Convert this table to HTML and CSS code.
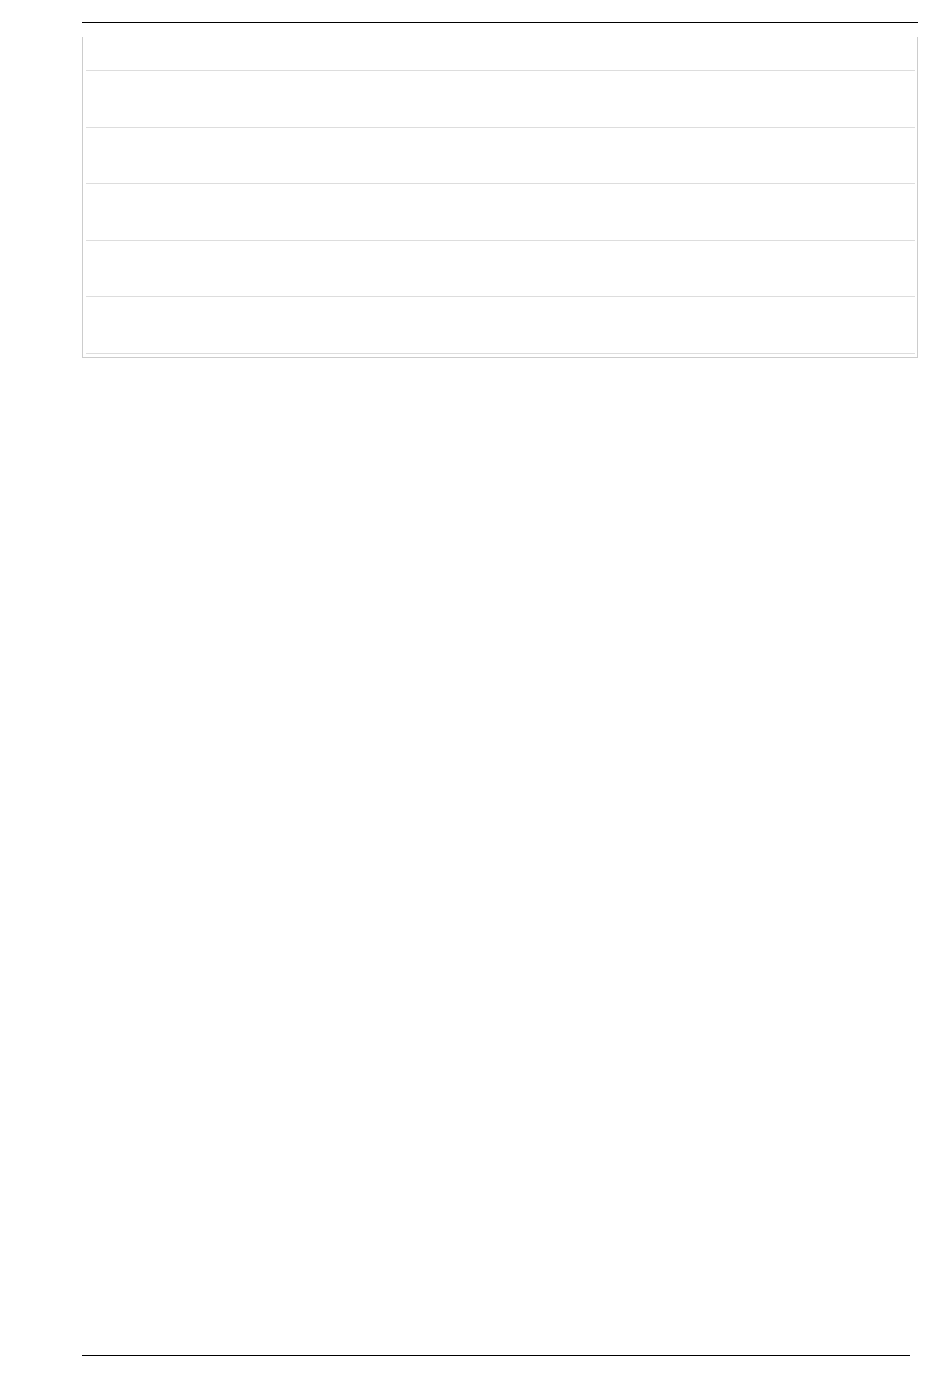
FILE: index.html
```html
<!DOCTYPE html>
<html>
<head>
	<title>Table page</title>
	<meta charset="utf-8">
	<link rel="stylesheet" href="styles.css">
</head>
<body>
	<article class="page">
		<header class="pageHead"></header>
		<section class="tableBox">
			<div class="row first"></div>
			<div class="row"></div>
			<div class="row"></div>
			<div class="row"></div>
			<div class="row"></div>
			<div class="row"></div>
		</section>
		<footer class="pageFoot"></footer>
	</article>
</body>
</html>
```

FILE: styles.css
```css
*{
	padding: 0;
	margin: 0;
	box-sizing: border-box;
}
body{
	background: #fff;
	font-family: "Liberation Sans", Arial, sans-serif;
}
.page{
	height: 1378px;
	padding-left: 82px;
	display: flex;
	flex-direction: column;
}
.pageHead{
	width: 836px;
	height: 23px;
	border-bottom: 1px solid #000;
	margin-bottom: 14px;
}
.tableBox{
	width: 836px;
	border: 1px solid #ccc;
	border-top: none;
	padding: 0 2px 3px 3px;
}
.row{
	height: 56.5px;
	border-bottom: 1px solid #ddd;
}
.row.first{
	height: 34px;
}
.pageFoot{
	margin-top: auto;
	width: 828px;
	height: 23px;
	border-top: 1px solid #000;
}
```
